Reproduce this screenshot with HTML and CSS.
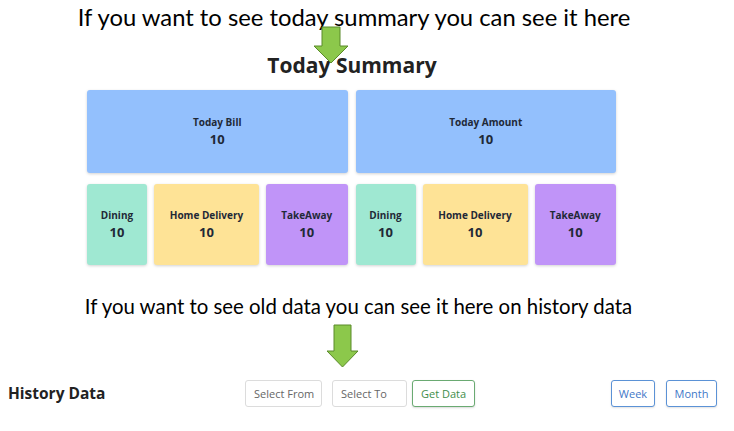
FILE: index.html
```html
<!DOCTYPE html>
<html>
<head>
<meta charset="utf-8">
<link rel="stylesheet" href="styles.css">
</head>
<body>
<div class="page">
  <div class="top">
    <p class="note note-top">If you want to see today summary you can see it here</p>
    <svg class="arrow arrow-top" width="36" height="38" viewBox="0 0 36 38">
      <polygon points="9,1 27,1 27,20 35,20 18,37 1,20 9,20" fill="#8cc84b" stroke="#5a8a2a" stroke-width="1"/>
    </svg>
    <h1 class="title">Today Summary</h1>
  </div>
  <div class="grid">
    <div class="half">
      <div class="card big blue"><div class="label">Today Bill</div><div class="num">10</div></div>
      <div class="row">
        <div class="card green w-dining"><div class="label">Dining</div><div class="num">10</div></div>
        <div class="card yellow w-home"><div class="label">Home Delivery</div><div class="num">10</div></div>
        <div class="card purple w-take"><div class="label">TakeAway</div><div class="num">10</div></div>
      </div>
    </div>
    <div class="half">
      <div class="card big blue"><div class="label">Today Amount</div><div class="num">10</div></div>
      <div class="row">
        <div class="card green w-dining"><div class="label">Dining</div><div class="num">10</div></div>
        <div class="card yellow w-home"><div class="label">Home Delivery</div><div class="num">10</div></div>
        <div class="card purple w-take"><div class="label">TakeAway</div><div class="num">10</div></div>
      </div>
    </div>
  </div>
  <p class="note note-mid">If you want to see old data you can see it here on history data</p>
  <div class="arrow-wrap">
    <svg class="arrow" width="33" height="44" viewBox="0 0 33 44">
      <polygon points="8,1 25,1 25,27 32,27 16.5,43 1,27 8,27" fill="#8cc84b" stroke="#5a8a2a" stroke-width="1"/>
    </svg>
  </div>
  <div class="history">
    <h2 class="h-title">History Data</h2>
    <div class="controls">
      <div class="input w-from">Select From</div>
      <div class="input w-to">Select To</div>
      <button class="btn btn-green">Get Data</button>
    </div>
    <div class="ranges">
      <button class="btn btn-blue">Week</button>
      <button class="btn btn-blue">Month</button>
    </div>
  </div>
</div>
</body>
</html>
```
FILE: styles.css
```css
* { box-sizing: border-box; }
html, body { margin: 0; padding: 0; background: #fff; }
body { width: 734px; height: 431px; overflow: hidden; font-family: "Open Sans", "Noto Sans", sans-serif; color: #222; }
.page { width: 734px; }
.top { position: relative; width: 704px; }
.note {
  margin: 0;
  font-family: Lato, "Liberation Sans", sans-serif;
  color: #000;
  text-align: center;
}
.note-top { padding-top: 3px; width: 708px; font-size: 23.8px; line-height: 28px; }
.arrow { display: block; }
.arrow-top { position: absolute; left: 313px; top: 26px; }
.title {
  margin: 20px 0 0 0;
  font-family: "Open Sans", sans-serif;
  font-weight: 700;
  font-size: 21px;
  line-height: 28px;
  text-align: center;
  color: #222;
}
.grid {
  width: 529px;
  margin: 11px 0 0 87px;
  display: flex;
  gap: 8px;
}
.half { width: 260.5px; display: flex; flex-direction: column; gap: 11px; }
.row { display: flex; gap: 7px; }
.card {
  border-radius: 3px;
  box-shadow: 0 1px 3px rgba(0,0,0,0.18);
  display: flex;
  flex-direction: column;
  align-items: center;
  justify-content: center;
  color: #1f2937;
  font-weight: 700;
}
.big { height: 83px; }
.row .card { height: 81px; }
.label { font-size: 10px; line-height: 14px; }
.num { font-size: 13px; line-height: 18px; margin-top: 1px; }
.blue { background: #93c0fd; }
.green { background: #9fe8d2; }
.yellow { background: #fee396; }
.purple { background: #c094f8; }
.w-dining { width: 60px; }
.w-home { width: 105px; }
.w-take { flex: 1; }
.note-mid { margin-top: 28px; width: 717px; font-size: 20.4px; line-height: 26px; }
.arrow-wrap { padding: 5px 0 0 326px; }
.history {
  display: flex;
  align-items: center;
  margin-top: 11px;
  padding: 0 17px 0 8px;
  height: 28px;
}
.h-title {
  margin: 0;
  font-family: "Open Sans", sans-serif;
  font-weight: 700;
  font-size: 15.5px;
  color: #222;
  width: 237px;
}
.controls { display: flex; flex: 1; }
.input, .btn {
  height: 27px;
  border-radius: 3px;
  font-family: "Open Sans", sans-serif;
  font-size: 11px;
  display: flex;
  align-items: center;
  justify-content: center;
  background: #fff;
  padding: 0;
}
.input { border: 1px solid #dcdcdc; color: #666; justify-content: flex-start; padding-left: 8px; }
.w-from { width: 77px; margin-right: 10px; }
.w-to { width: 75px; margin-right: 5px; }
.btn-green { width: 63px; border: 1px solid #6aaa72; color: #3f8e4a; box-shadow: 0 1px 2px rgba(0,0,0,0.15); }
.ranges { display: flex; gap: 11px; }
.btn-blue { border: 1px solid #5b92d6; color: #3f78c8; box-shadow: 0 1px 2px rgba(0,0,0,0.12); }
.ranges .btn:first-child { width: 44px; }
.ranges .btn:last-child { width: 51px; }
```
